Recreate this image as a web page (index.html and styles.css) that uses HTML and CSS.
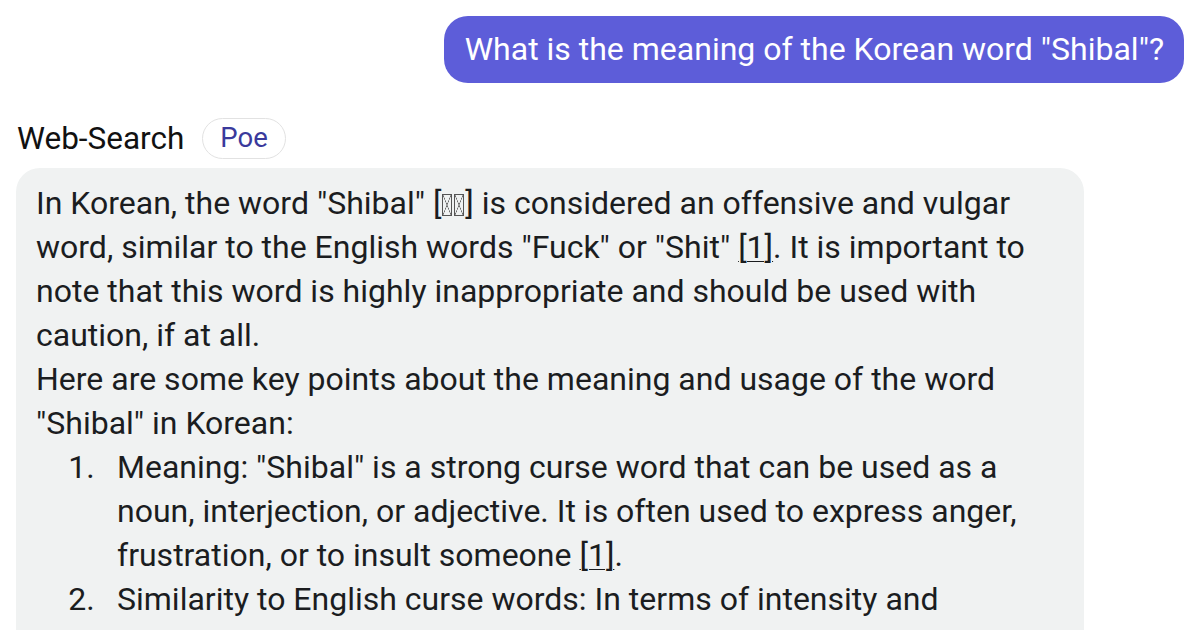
FILE: index.html
```html
<!DOCTYPE html>
<html lang="en">
<head>
<meta charset="utf-8">
<link rel="stylesheet" href="styles.css">
</head>
<body>
<div class="chat">
  <div class="user-row">
    <div class="user-bubble">What is the meaning of the Korean word "Shibal"?</div>
  </div>
  <div class="bot">
    <div class="bot-header">
      <span class="bot-name">Web-Search</span>
      <span class="badge">Poe</span>
    </div>
    <div class="bot-bubble">
      <p>In Korean, the word "Shibal" [<span class="tofu">씨</span><span class="tofu">발</span>] is considered an offensive and vulgar word, similar to the English words "Fuck" or "Shit" <a class="cite">[1]</a>. It is important to note that this word is highly inappropriate and should be used with caution, if at all.</p>
      <p>Here are some key points about the meaning and usage of the word "Shibal" in Korean:</p>
      <ol>
        <li>Meaning: "Shibal" is a strong curse word that can be used as a noun, interjection, or adjective. It is often used to express anger, frustration, or to insult someone <a class="cite">[1]</a>.</li>
        <li>Similarity to English curse words: In terms of intensity and offensiveness, it is comparable to English curse words.</li>
      </ol>
    </div>
  </div>
</div>
</body>
</html>
```
FILE: styles.css
```css
html, body {
  margin: 0;
  padding: 0;
  background: #ffffff;
}
body {
  font-family: Roboto, "Noto Sans", sans-serif;
  color: #1b1d1f;
  overflow: hidden;
  height: 630px;
}
.chat {
  padding: 16px 16px 0 16px;
}
.user-row {
  display: flex;
  justify-content: flex-end;
}
.user-bubble {
  background: #5d5dd9;
  color: #ffffff;
  font-size: 32px;
  line-height: 43px;
  padding: 12px 20px 12px 21px;
  border-radius: 24px;
}
.bot {
  margin-top: 35px;
}
.bot-header {
  display: flex;
  align-items: center;
  gap: 18px;
  padding-left: 1px;
}
.bot-name {
  font-size: 31.5px;
  color: #111;
}
.badge {
  font-size: 27.5px;
  color: #3a3a9c;
  border: 1.5px solid #e2e2e2;
  border-radius: 22px;
  height: 41px;
  box-sizing: border-box;
  display: flex;
  align-items: center;
  padding: 0 17px 2px 17px;
}
.bot-bubble {
  margin-top: 9px;
  width: 1068px;
  background: #f0f2f2;
  border-radius: 24px;
  padding: 13px 36px 20px 20px;
  box-sizing: border-box;
  font-size: 32px;
  line-height: 44px;
}
.bot-bubble p {
  margin: 0;
}
.bot-bubble ol {
  margin: 0;
  padding-left: 81px;
}
.bot-bubble li::marker {
  content: counter(list-item) ".  \2009";
}
.cite {
  color: inherit;
  text-decoration: underline;
  text-underline-offset: 3px;
  text-decoration-thickness: 1px;
}
.tofu {
  display: inline-block;
  width: 10px;
  height: 22px;
  margin: 0 1px;
  vertical-align: -2px;
  border: 1px solid #555;
  box-sizing: border-box;
  color: transparent;
  overflow: hidden;
  font-size: 6px;
  line-height: 20px;
  background:
    linear-gradient(to top right, transparent calc(50% - 0.6px), #555 50%, transparent calc(50% + 0.6px)),
    linear-gradient(to top left, transparent calc(50% - 0.6px), #555 50%, transparent calc(50% + 0.6px));
}
```
